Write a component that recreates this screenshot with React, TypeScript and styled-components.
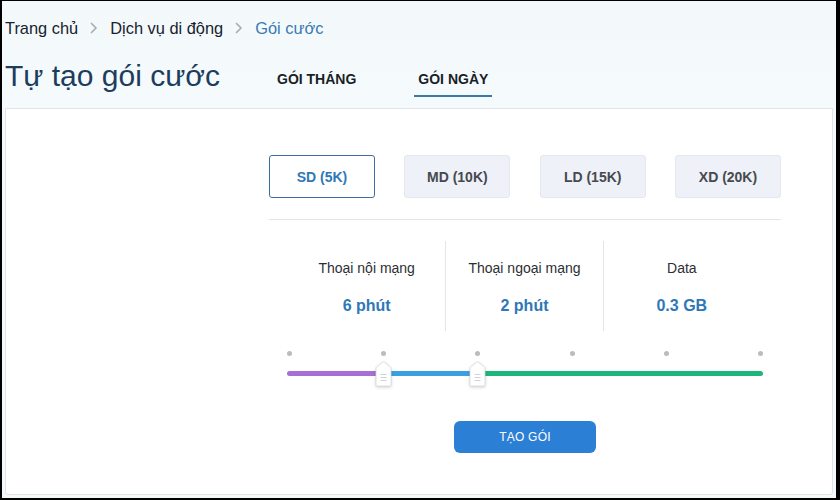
import React from "react";
import styled, { createGlobalStyle } from "styled-components";

const Global = createGlobalStyle`
  html, body { margin: 0; padding: 0; }
  body { font-family: "Liberation Sans", Arial, sans-serif; }
  * { box-sizing: border-box; }
`;

const Frame = styled.div`
  width: 840px;
  height: 500px;
  border-style: solid;
  border-color: #000;
  border-width: 1px 4px 2px 2px;
  background: #f4f9fb;
  display: flex;
  flex-direction: column;
  overflow: hidden;
`;

const Header = styled.header`
  padding: 17px 0 11px 3px;
  background: linear-gradient(#f3f9fb, #f5fbfd);
`;

const Breadcrumb = styled.nav`
  display: flex;
  align-items: center;
  gap: 12px;
  height: 20px;
  font-size: 16.4px;
  line-height: 20px;
`;

const Crumb = styled.span<{ $active?: boolean }>`
  color: ${(p) => (p.$active ? "#3a7bb0" : "#17222f")};
`;

const Chevron = () => (
  <svg width="8" height="12" viewBox="0 0 8 12" fill="none">
    <path d="M1.5 1.5 L6 6 L1.5 10.5" stroke="#a9adb2" strokeWidth="1.7" strokeLinecap="round" strokeLinejoin="round" />
  </svg>
);

const TitleRow = styled.div`
  display: flex;
  align-items: flex-start;
  margin-top: 22px;
`;

const Title = styled.h1`
  flex: 0 0 268px;
  margin: 0;
  font-size: 30px;
  line-height: 31px;
  font-weight: 400;
  color: #1d3d5e;
`;

const Tabs = styled.div`
  display: flex;
  gap: 54px;
`;

const Tab = styled.div<{ $active?: boolean }>`
  margin-top: 10px;
  padding: 0 4px 7px;
  font-size: 14px;
  line-height: 18px;
  font-weight: 700;
  color: #1a1f26;
  border-bottom: 2px solid ${(p) => (p.$active ? "#3a7aa6" : "transparent")};
`;

const Card = styled.main`
  flex: 1;
  margin: 0 3px 3px 3px;
  background: #fff;
  border: 1px solid #e1e5e8;
  border-radius: 0 0 3px 3px;
  padding: 46px 0 0 263px;
`;

const Content = styled.div`
  width: 512px;
  display: flex;
  flex-direction: column;
`;

const PlanRow = styled.div`
  display: flex;
  justify-content: space-between;
`;

const PlanButton = styled.button<{ $selected?: boolean }>`
  width: 106px;
  height: 43px;
  border-radius: 3px;
  font-family: "Liberation Sans", Arial, sans-serif;
  font-size: 14px;
  font-weight: 700;
  cursor: pointer;
  background: ${(p) => (p.$selected ? "#fff" : "#eef1f7")};
  color: ${(p) => (p.$selected ? "#2f78b8" : "#464a50")};
  border: ${(p) => (p.$selected ? "1.5px solid #3d6ea3" : "1px solid #e4e7ee")};
`;

const Divider = styled.hr`
  margin: 21px 0 0;
  border: none;
  border-top: 1px solid #e2e5e9;
  height: 0;
`;

const Stats = styled.div`
  margin-top: 21px;
  padding: 0 21px 0 19px;
  display: grid;
  grid-template-columns: repeat(3, 1fr);
`;

const Stat = styled.div<{ $first?: boolean }>`
  height: 90px;
  padding-top: 17px;
  text-align: center;
  border-left: ${(p) => (p.$first ? "none" : "1px solid #e3e5e8")};
`;

const StatLabel = styled.div`
  font-size: 14px;
  line-height: 20px;
  color: #2c2f33;
`;

const StatValue = styled.div`
  margin-top: 17px;
  font-size: 16px;
  line-height: 22px;
  font-weight: 700;
  color: #2f78b8;
`;

const Slider = styled.div`
  position: relative;
  margin: 20px 0 0 18px;
  width: 476px;
`;

const Dots = styled.div`
  display: flex;
  justify-content: space-between;
`;

const Dot = styled.span`
  width: 5px;
  height: 5px;
  border-radius: 50%;
  background: #b9bcc0;
`;

const Track = styled.div`
  margin-top: 15px;
  height: 5px;
  border-radius: 3px;
  display: flex;
  overflow: hidden;
`;

const Segment = styled.div<{ $color: string; $grow?: boolean }>`
  height: 100%;
  background: ${(p) => p.$color};
  flex: ${(p) => (p.$grow ? "1" : "none")};
`;

const HandleWrap = styled.div`
  position: absolute;
  top: 10px;
  width: 17px;
  height: 26px;
  margin-left: -8.5px;
  filter: drop-shadow(0 1px 1.5px rgba(0, 0, 0, 0.18));
`;

const Handle = ({ left }: { left: number }) => (
  <HandleWrap style={{ left }}>
    <svg width="17" height="26" viewBox="0 0 17 26">
      <path
        d="M1 7.5 Q1 6.5 2 5.8 L7.5 1.3 Q8.5 0.6 9.5 1.3 L15 5.8 Q16 6.5 16 7.5 V24 Q16 25 15 25 H2 Q1 25 1 24 Z"
        fill="#fff"
        stroke="#d6d8db"
        strokeWidth="0.8"
      />
      <path d="M5.5 13.5 H11.5 M5.5 16.5 H11.5 M5.5 19.5 H11.5" stroke="#cfd1d4" strokeWidth="1" />
    </svg>
  </HandleWrap>
);

const CreateButton = styled.button`
  align-self: center;
  margin-top: 45px;
  width: 142px;
  height: 32px;
  border: none;
  border-radius: 6px;
  background: #2b7fd5;
  color: #fff;
  font-family: "Liberation Sans", Arial, sans-serif;
  font-size: 12px;
  letter-spacing: 0.2px;
  cursor: pointer;
`;

const plans = ["SD (5K)", "MD (10K)", "LD (15K)", "XD (20K)"];
const stats = [
  { label: "Thoại nội mạng", value: "6 phút" },
  { label: "Thoại ngoại mạng", value: "2 phút" },
  { label: "Data", value: "0.3 GB" },
];

const SLIDER_W = 476;
const DOT = 5;
const STEPS = 5;
const pos = (i: number) => DOT / 2 + ((SLIDER_W - DOT) / STEPS) * i;

export default function App() {
  const handles = [1, 2];
  const p1 = pos(handles[0]);
  const p2 = pos(handles[1]);
  return (
    <>
      <Global />
      <Frame>
        <Header>
          <Breadcrumb>
            <Crumb>Trang chủ</Crumb>
            <Chevron />
            <Crumb>Dịch vụ di động</Crumb>
            <Chevron />
            <Crumb $active>Gói cước</Crumb>
          </Breadcrumb>
          <TitleRow>
            <Title>Tự tạo gói cước</Title>
            <Tabs>
              <Tab>GÓI THÁNG</Tab>
              <Tab $active>GÓI NGÀY</Tab>
            </Tabs>
          </TitleRow>
        </Header>
        <Card>
          <Content>
            <PlanRow>
              {plans.map((p, i) => (
                <PlanButton key={p} $selected={i === 0}>
                  {p}
                </PlanButton>
              ))}
            </PlanRow>
            <Divider />
            <Stats>
              {stats.map((s, i) => (
                <Stat key={s.label} $first={i === 0}>
                  <StatLabel>{s.label}</StatLabel>
                  <StatValue>{s.value}</StatValue>
                </Stat>
              ))}
            </Stats>
            <Slider>
              <Dots>
                {Array.from({ length: STEPS + 1 }).map((_, i) => (
                  <Dot key={i} />
                ))}
              </Dots>
              <Track>
                <Segment $color="#a56fd5" style={{ width: p1 }} />
                <Segment $color="#3b9fe4" style={{ width: p2 - p1 }} />
                <Segment $color="#1eb67c" $grow />
              </Track>
              <Handle left={p1} />
              <Handle left={p2} />
            </Slider>
            <CreateButton>TẠO GÓI</CreateButton>
          </Content>
        </Card>
      </Frame>
    </>
  );
}
